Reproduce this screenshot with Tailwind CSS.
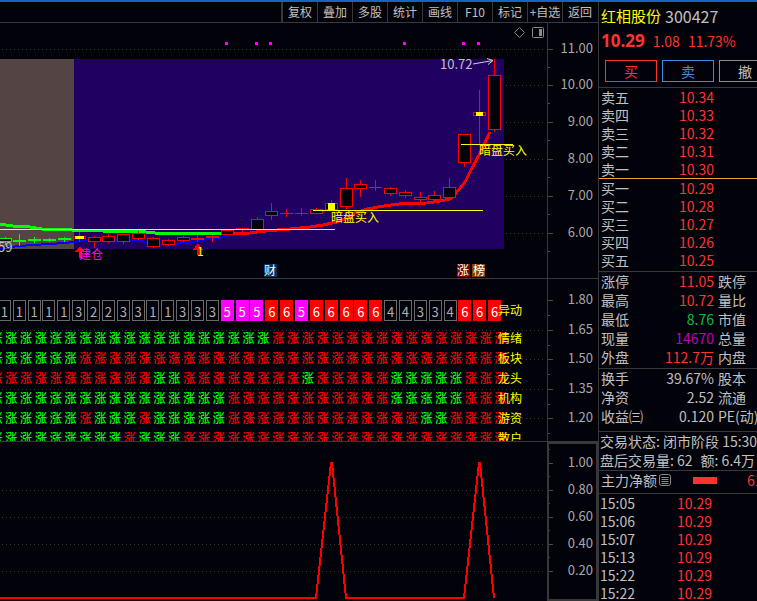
<!DOCTYPE html>
<html lang="zh-CN">
<head>
<meta charset="utf-8">
<title>红相股份 300427</title>
<script src="https://cdn.jsdelivr.net/npm/@tailwindcss/browser@4"></script>
</head>
<body class="h-screen overflow-hidden bg-[#02020a] text-[#c0c0c0] font-['Noto_Sans_CJK_SC','Noto_Sans',sans-serif] text-sm">
<div class="flex h-full flex-col border-t-2 border-[#1464c8]">
<div class="flex min-h-0 flex-1">

<main class="flex min-w-0 flex-1 flex-col overflow-hidden">
  <nav class="flex h-[21px] shrink-0 justify-end border-b border-[#383838] pr-px text-xs leading-5">
    <button class="w-9 overflow-hidden whitespace-nowrap border-l-2 border-[#383838]">复权</button>
    <button class="w-[35px] overflow-hidden whitespace-nowrap border-l border-[#383838]">叠加</button>
    <button class="w-[35px] overflow-hidden whitespace-nowrap border-l border-[#383838]">多股</button>
    <button class="w-[35px] overflow-hidden whitespace-nowrap border-l border-[#383838]">统计</button>
    <button class="w-[35px] overflow-hidden whitespace-nowrap border-l border-[#383838]">画线</button>
    <button class="w-[35px] overflow-hidden whitespace-nowrap border-l border-[#383838]">F10</button>
    <button class="w-[35px] overflow-hidden whitespace-nowrap border-l border-[#383838]">标记</button>
    <button class="w-[35px] overflow-hidden whitespace-nowrap border-l border-[#383838]">+自选</button>
    <button class="w-[35px] overflow-hidden whitespace-nowrap border-l border-[#383838]">返回</button>
  </nav>

  <section class="h-[256px] shrink-0 border-b border-[#383838]">
    <svg class="h-full w-full" viewBox="0 23 598 255" preserveAspectRatio="xMinYMin meet" shape-rendering="crispEdges">
      <rect x="0" y="59" width="504" height="190" fill="#200060"/>
      <rect x="0" y="59" width="74" height="190" fill="#544444"/>
      <g id="axis-price"></g>
      <g fill="#ff00ff">
        <rect x="225" y="42" width="3" height="3"/><rect x="255" y="42" width="3" height="3"/><rect x="269" y="42" width="3" height="3"/>
        <rect x="403" y="42" width="3" height="3"/><rect x="462" y="42" width="3" height="3"/><rect x="477" y="42" width="3" height="3"/>
      </g>
      <g fill="none" stroke="#8a8a8a" shape-rendering="geometricPrecision">
        <path d="M519.5 27.5l5 5-5 5-5-5z"/>
        <rect x="532.5" y="27.5" width="11" height="10" rx="1"/>
        <rect x="539" y="29" width="3" height="7" fill="#8a8a8a" stroke="none"/>
      </g>
      <polyline fill="none" stroke="#0000ff" stroke-width="2" points="0,248 10,247 20,246 33,245 50,244 65,243 73,242 80,241 88,240 100,240 130,240 140,241 146,242 160,244 174,244 187,243 192,242 200,240.500 208,239 218,238 227,236"/>
      <polyline fill="none" stroke="#00ff00" stroke-width="3" points="0,224 6,225 13,226 30,227 42,229 72,230 102,231 146,232 160,233.500 222,233.500"/>
      <polyline fill="none" stroke="#ff0000" stroke-width="3" points="222,233.500 250,233 260,231.500 277,230 290,229 310,227 323,225 337,222 350,217 355,213 367,209 387,205.500 403,203.500 427,203 440,201 450,199 457,192 465,182 470,172 480,153 490,132"/>
      <g id="candles"></g>
      <g stroke="#ffff00">
        <path d="M0 229.500H335M313 210.500H483M461 144.500H513"/>
      </g>
      <path d="M80 246l5 6h-3v6h-3v-6h-4zM198 243l5 7h-3v5h-3v-5h-4z" fill="#ff0000"/>
      <path d="M473 64l20-3.500M487 58.500l6 2-5 4" fill="none" stroke="#d0d0d0" shape-rendering="geometricPrecision"/>
      <g font-size="12">
        <text x="79" y="259" fill="#ff00ff">建仓</text>
        <text x="197" y="256" fill="#ffff00">1</text>
        <text x="331" y="222" fill="#ffff00">暗盘买入</text>
        <text x="479" y="155" fill="#ffff00">暗盘买入</text>
      </g>
      <g font-size="13" fill="#c0c0c0">
        <text x="-2" y="252">59</text>
        <text x="440" y="69">10.72</text>
      </g>
      <rect x="264" y="264" width="13" height="13" fill="#003264"/>
      <rect x="457" y="264" width="13" height="13" fill="#780000"/>
      <rect x="472" y="264" width="13" height="13" fill="#824000"/>
      <g font-size="12" fill="#ffffff" text-anchor="middle">
        <text x="270" y="275">财</text><text x="463" y="275">涨</text><text x="479" y="275">榜</text>
      </g>
    </svg>
  </section>

  <section class="relative h-[163px] shrink-0 overflow-hidden border-b border-[#383838]">
    <svg class="absolute inset-0 h-full w-full" viewBox="0 279 598 162" preserveAspectRatio="xMinYMin meet" shape-rendering="crispEdges">
      <g id="axis-mood"></g>
    </svg>
    <div id="matrix" class="relative pt-[21px] text-xs leading-5"></div>
  </section>

  <section class="min-h-0 flex-1 overflow-hidden">
    <svg class="h-[159px] w-full" viewBox="0 442 598 159" preserveAspectRatio="xMinYMin meet" shape-rendering="crispEdges">
      <g id="axis-signal"></g>
      <rect x="548" y="443" width="49" height="157" fill="none" stroke="#383838" stroke-width="2"/>
      <polyline fill="none" stroke="#ff0000" stroke-width="2" points="0,598 316,598 331,463 332,463 346,598 464,598 479,463 480,463 494,598"/>
    </svg>
  </section>
</main>

<aside class="flex w-[159px] shrink-0 flex-col overflow-hidden whitespace-nowrap border-l border-[#383838]">
  <header class="shrink-0 border-b border-[#383838] pb-[5px] pl-0.5">
    <h1 class="flex h-7 items-center gap-1 text-[15px]"><span class="text-[#ffff00]">红相股份</span><span class="text-base">300427</span></h1>
    <p class="flex h-[22px] items-center gap-2 text-[#ff3232]"><b class="font-['Noto_Sans'] text-[17px]">10.29</b><span>1.08</span><span>11.73%</span></p>
    <div class="mt-2 flex gap-[5px] pl-1 leading-5">
      <button class="h-[22px] w-[52px] shrink-0 border border-[#ff3232] text-[#ff3232]">买</button>
      <button class="h-[22px] w-[52px] shrink-0 border border-[#3c8cdc] text-[#3c8cdc]">卖</button>
      <button class="h-[22px] w-[52px] shrink-0 border border-[#8c8c8c]">撤</button>
    </div>
  </header>

  <table class="w-[115px] shrink-0 leading-[18px]">
    <tbody>
      <tr><th class="p-0 pl-0.5 text-left font-normal">卖五</th><td class="p-0 text-right text-[#ff3232]">10.34</td></tr>
      <tr><th class="p-0 pl-0.5 text-left font-normal">卖四</th><td class="p-0 text-right text-[#ff3232]">10.33</td></tr>
      <tr><th class="p-0 pl-0.5 text-left font-normal">卖三</th><td class="p-0 text-right text-[#ff3232]">10.32</td></tr>
      <tr><th class="p-0 pl-0.5 text-left font-normal">卖二</th><td class="p-0 text-right text-[#ff3232]">10.31</td></tr>
      <tr><th class="p-0 pl-0.5 text-left font-normal">卖一</th><td class="p-0 text-right text-[#ff3232]">10.30</td></tr>
    </tbody>
  </table>
  <div class="shrink-0 border-y border-t-[#f0a028] border-b-[#383838] pb-0.5">
    <table class="w-[115px] leading-[18px]">
      <tbody>
        <tr><th class="p-0 pl-0.5 text-left font-normal">买一</th><td class="p-0 text-right text-[#ff3232]">10.29</td></tr>
        <tr><th class="p-0 pl-0.5 text-left font-normal">买二</th><td class="p-0 text-right text-[#ff3232]">10.28</td></tr>
        <tr><th class="p-0 pl-0.5 text-left font-normal">买三</th><td class="p-0 text-right text-[#ff3232]">10.27</td></tr>
        <tr><th class="p-0 pl-0.5 text-left font-normal">买四</th><td class="p-0 text-right text-[#ff3232]">10.26</td></tr>
        <tr><th class="p-0 pl-0.5 text-left font-normal">买五</th><td class="p-0 text-right text-[#ff3232]">10.25</td></tr>
      </tbody>
    </table>
  </div>

  <dl class="grid shrink-0 grid-cols-[43px_70px_1fr] border-b border-[#383838] pb-px pl-0.5 leading-[19px]">
    <dt>涨停</dt><dd class="text-right text-[#ff3232]">11.05</dd><dt class="pl-1">跌停</dt>
    <dt>最高</dt><dd class="text-right text-[#ff3232]">10.72</dd><dt class="pl-1">量比</dt>
    <dt>最低</dt><dd class="text-right text-[#00c040]">8.76</dd><dt class="pl-1">市值</dt>
    <dt>现量</dt><dd class="text-right text-[#c000c0]">14670</dd><dt class="pl-1">总量</dt>
    <dt>外盘</dt><dd class="text-right text-[#ff3232]">112.7万</dd><dt class="pl-1">内盘</dt>
  </dl>
  <dl class="grid shrink-0 grid-cols-[43px_70px_1fr] border-b border-[#383838] pb-[5px] pl-0.5 leading-[19px]">
    <dt>换手</dt><dd class="text-right">39.67%</dd><dt class="pl-1">股本</dt>
    <dt>净资</dt><dd class="text-right">2.52</dd><dt class="pl-1">流通</dt>
    <dt>收益㈢</dt><dd class="text-right">0.120</dd><dt class="pl-1">PE(动)</dt>
  </dl>
  <div class="shrink-0 border-b border-[#383838] pl-px leading-[19px]">
    <p>交易状态: 闭市阶段 15:30</p>
    <p class="flex gap-2"><span>盘后交易量: 62</span><span>额: 6.4万</span></p>
  </div>
  <div class="flex h-[23px] shrink-0 items-center border-b border-[#383838] pb-1 pl-0.5">
    <span>主力净额</span>
    <svg class="ml-0.5 h-3 w-3 shrink-0" viewBox="0 0 12 12" fill="none" stroke="#8a8a8a"><rect x=".5" y=".5" width="11" height="11" rx="2"/><path d="M2.500 3.500h7M2.500 5.500h7M2.500 7.500h7M2.500 9.500h7"/></svg>
    <span class="ml-[22px] h-[7px] w-6 shrink-0 bg-[#ff3232]"></span>
    <span class="ml-[30px] text-[#ff3232]">61.2</span>
  </div>
  <table class="w-[113px] shrink-0 leading-[18px]">
    <tbody>
      <tr><td class="p-0 pl-px">15:05</td><td class="p-0 text-right text-[#ff3232]">10.29</td></tr>
      <tr><td class="p-0 pl-px">15:06</td><td class="p-0 text-right text-[#ff3232]">10.29</td></tr>
      <tr><td class="p-0 pl-px">15:07</td><td class="p-0 text-right text-[#ff3232]">10.29</td></tr>
      <tr><td class="p-0 pl-px">15:13</td><td class="p-0 text-right text-[#ff3232]">10.29</td></tr>
      <tr><td class="p-0 pl-px">15:22</td><td class="p-0 text-right text-[#ff3232]">10.29</td></tr>
      <tr><td class="p-0 pl-px">15:22</td><td class="p-0 text-right text-[#ff3232]">10.29</td></tr>
    </tbody>
  </table>
</aside>
</div>
</div>

<script>
// Axis: [label, y, x where the dotted grid line starts]
function axis(id, top, bottom, minor, ticks) {
  let s = `<path d="M547.500 ${top}V${bottom}" stroke="#383838"/>`;
  for (const [label, y, from] of ticks) {
    s += `<path d="M${from} ${y + 0.5}H544" stroke="#383838" stroke-dasharray="1 3"/>` +
      `<path d="M548 ${y + 0.5}h5M548 ${Math.round(y + minor) + 0.5}h2" stroke="#4a4a4a"/>` +
      `<text x="593" y="${y + 4}" text-anchor="end" font-size="13" fill="#a8a8a8">${label}</text>`;
  }
  document.getElementById(id).innerHTML = s;
}
axis('axis-price', 23, 278, 18, [['11.00', 49, 2], ['10.00', 85, 506], ['9.00', 122, 506], ['8.00', 159, 506], ['7.00', 196, 506], ['6.00', 233, 506]]);
axis('axis-mood', 279, 441, 15, [['1.80', 300, 544], ['1.65', 330, 2], ['1.50', 359, 2], ['1.35', 389, 2], ['1.20', 418, 2]]);
axis('axis-signal', 442, 601, -14, [['1.00', 463, 544], ['0.80', 490, 2], ['0.60', 517, 2], ['0.40', 544, 2], ['0.20', 571, 2]]);

// Candle: [center x, body top, body bottom, wick top, wick bottom]; equal body values draw a flat bar
const candles = [
  [5, 238, 241, 237, 244], [19, 240, 240, 234, 245], [34, 239, 239, 237, 242], [49, 239, 239, 238, 241], [64, 238, 238, 237, 241],
  [79, 236, 238, 232, 241], [94, 237, 241, 236, 247], [108, 236, 241, 234, 242], [123, 234, 241, 234, 243], [138, 233, 238, 231, 239],
  [153, 238, 246, 237, 247], [168, 240, 244, 239, 245], [183, 237, 240, 236, 241], [197, 238, 238, 235, 241], [212, 236, 237, 235, 241],
  [227, 230, 234, 230, 234], [242, 228, 228, 229, 232], [257, 219, 229, 217, 231], [271, 211, 215, 203, 219], [286, 213, 213, 209, 216],
  [301, 213, 213, 208, 215], [316, 209, 213, 208, 213], [331, 203, 209, 200, 210], [346, 188, 206, 178, 208], [360, 184, 188, 180, 196],
  [375, 187, 187, 180, 190], [390, 188, 193, 187, 195], [405, 192, 195, 190, 197], [420, 197, 199, 192, 201], [434, 195, 199, 191, 201],
  [449, 187, 197, 178, 198], [464, 134, 162, 134, 166], [479, 112, 115, 90, 144], [494, 75, 129, 59, 131]
];
document.getElementById('candles').innerHTML = candles.map(([x, a, b, w1, w2], i) => {
  const c = i < 5 ? '#00ff00' : '#ff0000';
  let s = `<path d="M${x + 0.5} ${w1}V${w2 + 1}" stroke="${c}"/>`;
  s += a === b
    ? `<rect x="${x - 6}" y="${a}" width="13" height="${i < 14 ? 2 : 1}" fill="${c}"/>`
    : `<rect x="${x - 5.5}" y="${a + 0.5}" width="12" height="${b - a}" fill="#02020a" stroke="${c}"/>`;
  if (i === 5) s += `<rect x="${x - 4}" y="236" width="9" height="3" fill="#ffff00"/>`;
  if (i === 22) s += `<rect x="${x - 3}" y="203" width="7" height="7" fill="#ffff00"/>`;
  if (i === 32) s += `<rect x="${x - 3}" y="112" width="7" height="4" fill="#ffff00"/>`;
  return s;
}).join('');

// Score boxes, then one row of marks per factor (g = green, r = red)
const boxClass = {
  5: 'bg-[#ff00ff] text-white border-[#ff00ff]',
  6: 'bg-[#ff0000] text-white border-[#ff0000]'
};
const scores = '1111132233113335556656666644334666';
let html = '<div class="flex h-[21px] mb-[7px]"><div class="-ml-[3px] grid w-[505px] shrink-0 grid-cols-[repeat(34,1fr)] text-[13px] leading-4">' +
  [...scores].map(n => `<span class="mx-auto flex h-[21px] w-[13px] items-end justify-center border ${boxClass[n] || 'border-[#6a6a6a] text-[#b0b0b0]'}">${n}</span>`).join('') +
  '</div><span class="-ml-1 text-[#ffff00]">异动</span></div>';
const rows = [
  ['情绪', 'g'.repeat(19) + 'r'.repeat(16)],
  ['板块', 'g'.repeat(6) + 'r'.repeat(29)],
  ['龙头', 'rrrrrrrrrrrggrrrrrrrrgrrrrrgggggrrr'],
  ['机构', 'g'.repeat(16) + 'r'.repeat(11) + 'gggggrrr'],
  ['游资', 'ggggggrgggrgggggrrrrrrrrrrrrrggrrrr'],
  ['散户', 'gggggggggrgggrrrrrrrrrrrrrrrrrrrrrr']
];
for (const [name, marks] of rows) {
  html += '<div class="flex h-5"><div class="-ml-[11px] grid w-[519px] shrink-0 grid-cols-[repeat(35,1fr)] text-center font-medium">' +
    [...marks].map(m => `<span class="${m === 'g' ? 'text-[#00ff00]' : 'text-[#ff0000]'}">涨</span>`).join('') +
    `</div><span class="relative -ml-2.5 text-[#ffff00]">${name}</span></div>`;
}
document.getElementById('matrix').innerHTML = html;
</script>
</body>
</html>
